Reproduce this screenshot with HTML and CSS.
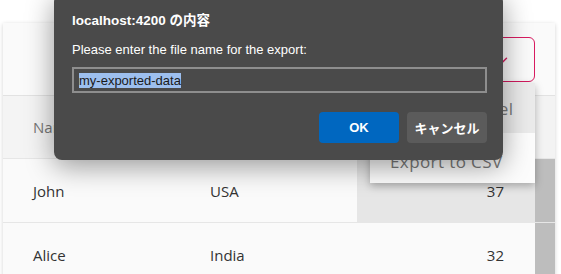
FILE: index.html
```html
<!DOCTYPE html>
<html lang="en">
<head>
    <meta charset="UTF-8">
    <meta name="viewport" content="width=device-width, initial-scale=1.0">
    <title>Users</title>
    <link rel="stylesheet" href="styles.css">
</head>
<body>
    <div class="page">
        <div class="card">
            <div class="toolbar">
                <button class="export-button">
                    <span>Export</span>
                    <svg viewBox="0 0 24 24" class="chevron">
                        <path d="M6 9l6 6 6-6"/>
                    </svg>
                </button>
            </div>
            <div class="row head">
                <div class="cell name">Name</div>
                <div class="cell country">Country</div>
                <div class="cell age">Age</div>
                <div class="gutter"></div>
            </div>
            <div class="row">
                <div class="cell name">John</div>
                <div class="cell country">USA</div>
                <div class="cell age hover">37</div>
                <div class="gutter"></div>
            </div>
            <div class="row">
                <div class="cell name">Alice</div>
                <div class="cell country">India</div>
                <div class="cell age">32</div>
                <div class="gutter"></div>
            </div>
        </div>
    </div>

    <!-- export menu opened from the toolbar button -->
    <div class="menu">
        <div class="menu-item focused">Export to Excel</div>
        <div class="menu-item">Export to CSV</div>
    </div>

    <!-- browser prompt -->
    <div class="dialog">
        <div class="dialog-title">localhost:4200 の内容</div>
        <div class="dialog-text">Please enter the file name for the export:</div>
        <div class="dialog-input"><span class="selected">my-exported-data</span></div>
        <div class="dialog-buttons">
            <button class="btn ok">OK</button>
            <button class="btn cancel">キャンセル</button>
        </div>
    </div>
</body>
</html>
```

FILE: styles.css
```css
html, body {
    height: 100%;
    margin: 0;
    background-color: #ffffff;
    overflow: hidden;
}
.page {
    padding: 23px 6px 0 3px;
    font-family: "Open Sans", sans-serif;
}
.card {
    background-color: #fafafa;
    box-shadow: 0 1px 4px rgba(0, 0, 0, 0.18);
}
.toolbar {
    height: 73px;
    display: flex;
    justify-content: flex-end;
    align-items: flex-start;
    padding: 14px 20px 0 0;
    box-sizing: border-box;
    border-bottom: 1px solid #e2e2e2;
}
.export-button {
    width: 140px;
    height: 45px;
    border: 1px solid #d81b60;
    border-radius: 6px;
    background: transparent;
    color: #d81b60;
    font-family: "Open Sans", sans-serif;
    font-size: 15px;
    display: flex;
    align-items: center;
    justify-content: flex-end;
    gap: 20px;
    padding: 0 24px 0 0;
}
.chevron {
    width: 14px;
    height: 14px;
}
.chevron path {
    fill: none;
    stroke: #d81b60;
    stroke-width: 2.5;
    stroke-linecap: round;
}
.row {
    display: flex;
    height: 64px;
    border-bottom: 1px solid #e6e6e6;
    box-sizing: border-box;
    font-size: 15px;
    color: #333333;
}
.row.head {
    height: 63px;
    color: #777777;
    background-color: #f4f4f4;
}
.cell {
    display: flex;
    align-items: center;
}
.cell.name {
    width: 204px;
    padding-left: 30px;
    box-sizing: border-box;
}
.cell.country {
    width: 150px;
    padding-left: 3px;
    box-sizing: border-box;
}
.cell.age {
    width: 178px;
    justify-content: flex-end;
    padding-right: 31px;
    box-sizing: border-box;
}
.cell.hover {
    background-color: #e6e6e6;
}
.gutter {
    width: 20px;
    background-color: #bdbdbd;
}
.head .gutter {
    background-color: #f3f3f3;
}
.menu {
    position: absolute;
    left: 370px;
    top: 83px;
    width: 165px;
    background-color: #fcfcfc;
    box-shadow: 0 3px 8px rgba(0, 0, 0, 0.28);
    font-family: "Open Sans", sans-serif;
    font-size: 17px;
    letter-spacing: 0.4px;
    color: #7a7a7a;
}
.menu-item {
    height: 50px;
    display: flex;
    align-items: center;
    white-space: nowrap;
    padding: 1px 0 0 20px;
    box-sizing: border-box;
}
.menu-item + .menu-item {
    padding-top: 6px;
}
.menu-item.focused {
    background-color: #ebebeb;
}
.dialog {
    position: absolute;
    left: 54px;
    top: -6px;
    width: 449px;
    height: 166px;
    box-sizing: border-box;
    padding: 18px 16px 0 18px;
    background-color: #4a4a4a;
    border-radius: 8px;
    box-shadow: 0 6px 28px rgba(0, 0, 0, 0.4);
    font-family: "Liberation Sans", "Noto Sans CJK JP", sans-serif;
    color: #ffffff;
}
.dialog-title {
    font-size: 13.5px;
    font-weight: bold;
    line-height: 18px;
}
.dialog-text {
    margin-top: 12px;
    font-size: 13px;
    line-height: 16px;
}
.dialog-input {
    margin-top: 9px;
    height: 26px;
    border: 2px solid #8e8e8e;
    box-sizing: border-box;
    padding-left: 5px;
    display: flex;
    align-items: center;
    font-size: 13px;
}
.selected {
    background-color: #9dbfee;
    color: #1a1a1a;
}
.dialog-buttons {
    margin-top: 19px;
    display: flex;
    justify-content: flex-end;
    gap: 8px;
}
.btn {
    width: 80px;
    height: 31px;
    border: none;
    border-radius: 4px;
    color: #ffffff;
    font-family: "Liberation Sans", "Noto Sans CJK JP", sans-serif;
    font-size: 13px;
    font-weight: bold;
}
.btn.ok {
    background-color: #0067c0;
}
.btn.cancel {
    background-color: #5b5b5b;
}
```
